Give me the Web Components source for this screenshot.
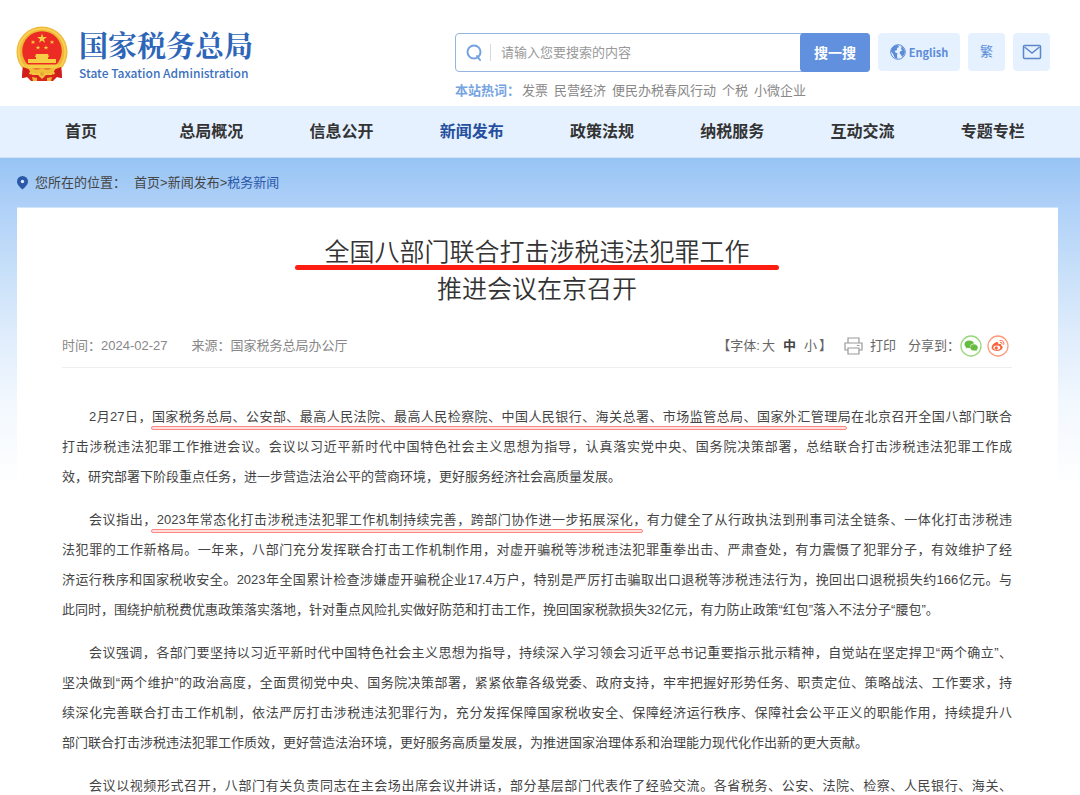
<!DOCTYPE html>
<html lang="zh-CN">
<head>
<meta charset="utf-8">
<meta name="viewport" content="width=device-width, initial-scale=1">
<title>国家税务总局 - 税务新闻</title>
<style>
  body { margin: 0; background: #fff; color: #333; font: 13px/20px "Liberation Sans", "Noto Sans CJK SC", sans-serif; }
</style>
</head>
<body>
<tax-page></tax-page>

<script>
const define = (name, html) => {
  const template = document.createElement('template');
  template.innerHTML = html;
  customElements.define(name, class extends HTMLElement {
    constructor() {
      super();
      this.attachShadow({ mode: 'open' }).append(template.content.cloneNode(true));
    }
  });
};

define('tax-logo', `
<style>
  :host { display: block; }
  a { display: flex; align-items: center; gap: 10px; color: #2d66b8; text-decoration: none; }
  svg { display: block; flex: none; }
  span { display: grid; gap: 3px; }
  strong { font: 700 29px/35px "Noto Serif CJK SC", "Noto Sans CJK SC", serif; }
  small { font: 500 12px/16px "Noto Sans CJK SC", sans-serif; color: #3a70bd; }
</style>
<a href="#">
  <svg width="53" height="56" viewBox="0 0 53 56" role="img" aria-label="国徽">
    <path d="M7 37 6 52l5-1 4 4h22l4-4 5 1-1-15z" fill="#d9231d"/>
    <circle cx="26" cy="26" r="25.500" fill="#efb735"/>
    <circle cx="26" cy="26" r="23.300" fill="none" stroke="#f8cf54" stroke-width="2"/>
    <circle cx="26" cy="25" r="19.800" fill="#ec2c24"/>
    <g fill="#f6cd45">
      <path d="m26 7.500 1.200 3.500h3.700l-3 2.200 1.100 3.600-3-2.200-3 2.200 1.100-3.600-3-2.200h3.700z"/>
      <path d="m17 14 .6 1.500h1.600l-1.200 1 .5 1.600-1.500-1-1.500 1 .5-1.600-1.200-1h1.600z"/>
      <path d="m36 14 .6 1.500h1.600l-1.200 1 .5 1.600-1.500-1-1.500 1 .5-1.600-1.200-1h1.600z"/>
      <path d="m22 19.500 .6 1.500h1.600l-1.200 1 .5 1.600-1.500-1-1.500 1 .5-1.600-1.200-1h1.600z"/>
      <path d="m30 19.500 .6 1.500h1.600l-1.200 1 .5 1.600-1.500-1-1.500 1 .5-1.600-1.200-1h1.600z"/>
      <path d="M20 28h12l1 3h-1v2h8v4H12v-4h8v-2h-1z"/>
      <path d="M8 38.500h36l-4 4H12z"/>
    </g>
    <path d="m7 41 8 3-4 7-5 1zM45 41l-8 3 4 7 5 1z" fill="#d01f1b"/>
    <path d="M12 42q8 3 14 0 6 3 14 0l-3 5-6-1-5 4-5-4-6 1z" fill="#f2bd38"/>
    <path d="M15 47h22v4l-3 4H18l-3-4z" fill="#da251e"/>
    <path d="M14 46q6 2 12 0 6 2 12 0l-2 3h-6l-4 4-4-4h-6z" fill="#f4c543"/>
    <path d="m16 51 5 1v3h-4zM36 51l-5 1v3h4z" fill="#eeb538"/>
    <circle cx="26" cy="48" r="2" fill="#e8a832"/>
  </svg>
  <span><strong>国家税务总局</strong><small>State Taxation Administration</small></span>
</a>`);

define('tax-search', `
<style>
  :host { display: block; flex: 1; min-width: 0; }
  form { display: flex; box-sizing: border-box; height: 39px; border: 1px solid #94b4e2; border-radius: 4px; }
  label { flex: 1; min-width: 0; display: flex; align-items: center; padding-left: 10px; }
  svg { flex: none; }
  i { width: 1px; height: 17px; margin: 0 10px 0 8px; background: #d5d9df; }
  input { flex: 1; min-width: 0; border: 0; padding: 0; outline: 0; background: none; font: inherit; color: #333; }
  input::placeholder { color: #999; opacity: 1; }
  button { width: 70px; margin: -1px; border: 0; border-radius: 4px; background: #6191de; color: #fff; font: inherit; font-size: 14px; font-weight: 700; padding: 0; }
</style>
<form>
  <label aria-label="搜索">
    <svg width="16" height="18" viewBox="0 0 16 18" fill="none" stroke="#75a2e0" stroke-width="2"><circle cx="8" cy="8" r="6.500"/><path d="m11 12 3 4" stroke-linecap="round"/></svg>
    <i></i>
    <input type="text" placeholder="请输入您要搜索的内容">
  </label>
  <button type="button">搜一搜</button>
</form>`);

define('tax-tools', `
<style>
  :host { display: flex; gap: 8px; }
  a, button { display: flex; align-items: center; justify-content: center; box-sizing: border-box; height: 38px; width: 37px; border: 0; border-radius: 4px; padding: 0; background: #e5f1ff; color: #5c8cd9; font: inherit; text-decoration: none; }
  .en { width: 82px; gap: 3px; font: 700 11px/20px "Noto Sans CJK SC", sans-serif; }
</style>
<a class="en" href="#">
  <svg width="16" height="16" viewBox="0 0 16 16"><circle cx="8" cy="8" r="7.300" fill="#e5f1ff" stroke="#5c8cd9" stroke-width="1"/><path d="M2 4 5 1.500 8 1l1 2-2 1v2L4.500 7l1 1.500 2 1-.5 2 .5 3.500-3-1.500L3 10 .8 7zM10 1.500l3 2L15 7l-.5 3-2 3-1.500-2-1.500-2 1-2 2-.5-1.500-1.500.5-2z" fill="#5c8cd9"/></svg>
  English
</a>
<button type="button">繁</button>
<a href="#" aria-label="邮箱">
  <svg width="20" height="16" viewBox="0 0 20 16" fill="none" stroke="#5d87c8" stroke-width="1.500"><rect x="1.500" y="1.500" width="17" height="13" rx="1"/><path d="m2.500 3 7.500 6 7.500-6"/></svg>
</a>`);

define('tax-hotwords', `
<style>
  :host { display: flex; gap: 2px; line-height: 20px; white-space: nowrap; }
  b { color: #76a4e1; }
  nav { display: flex; gap: 6px; }
  a { color: #888; text-decoration: none; }
</style>
<b>本站热词：</b>
<nav><a href="#">发票</a><a href="#">民营经济</a><a href="#">便民办税春风行动</a><a href="#">个税</a><a href="#">小微企业</a></nav>`);

define('tax-header', `
<style>
  :host { display: flex; justify-content: space-between; align-items: flex-start; box-sizing: border-box; height: 106px; padding: 0 30px 0 16px; }
  tax-logo { padding-top: 26px; }
  .side { flex: 0 1 595px; padding-top: 33px; }
  .row { display: flex; gap: 8px; margin-bottom: 9px; }
</style>
<tax-logo></tax-logo>
<div class="side">
  <div class="row"><tax-search></tax-search><tax-tools></tax-tools></div>
  <tax-hotwords></tax-hotwords>
</div>`);

define('tax-nav', `
<style>
  :host { display: block; background: #e5f1ff; border-bottom: 1px solid #cfe2fa; padding: 0 22px 0 16px; }
  nav { display: grid; grid-template-columns: repeat(8, 1fr); }
  a { text-align: center; font-size: 16px; line-height: 51px; font-weight: 700; color: #333; text-decoration: none; }
  a[aria-current] { color: #254f9e; }
</style>
<nav><a href="#">首页</a><a href="#">总局概况</a><a href="#">信息公开</a><a href="#" aria-current="page">新闻发布</a><a href="#">政策法规</a><a href="#">纳税服务</a><a href="#">互动交流</a><a href="#">专题专栏</a></nav>`);

define('tax-crumbs', `
<style>
  :host { display: flex; align-items: center; height: 49px; color: #444; }
  svg { margin-right: 7px; }
  nav { margin-left: 8px; }
  a { color: inherit; text-decoration: none; }
  a[aria-current] { color: #2b58a8; }
</style>
<svg width="11" height="14" viewBox="0 0 11 14"><path d="M5.500 0A5.500 5.500 0 0 0 0 5.500C0 9 3.500 11.500 5.500 13.500 7.500 11.500 11 9 11 5.500A5.500 5.500 0 0 0 5.500 0z" fill="#2a59a8"/><circle cx="5.500" cy="5.500" r="1.700" fill="#dcebff"/></svg>
<span>您所在的位置：</span>
<nav><a href="#">首页</a>&gt;<a href="#">新闻发布</a>&gt;<a href="#" aria-current="page">税务新闻</a></nav>`);

define('article-meta', `
<style>
  :host { display: flex; align-items: center; height: 24px; padding-bottom: 9px; border-bottom: 1px solid #eee; color: #888; white-space: nowrap; }
  .src { margin-left: 24px; }
  .size { margin-left: auto; display: flex; gap: 8px; color: #666; }
  .size span:first-child { margin-right: -6px; }
  button { border: 0; padding: 0; background: none; font: inherit; color: inherit; display: flex; align-items: center; gap: 7px; }
  .on { font-weight: 700; color: #444; }
  .size span:last-child { margin-left: -6px; }
  .print { margin-left: 12px; color: #666; }
  .share { margin-left: 12px; margin-right: 3px; display: flex; align-items: center; color: #666; }
  .share a { display: block; height: 22px; }
  .share a + a { margin-left: 5px; }
  svg { display: block; }
</style>
<span>时间：2024-02-27</span>
<span class="src">来源：国家税务总局办公厅</span>
<div class="size"><span>【字体:</span><button type="button">大</button><button type="button" class="on">中</button><button type="button">小</button><span>】</span></div>
<button type="button" class="print">
  <svg width="19" height="18" viewBox="0 0 19 18" fill="none" stroke="#999" stroke-width="1.200"><path d="M4 6V1h11v5M4 13H1V6h17v7h-3"/><path d="M4 11h11v6H4zM13 8.500h2.500"/></svg>
  打印
</button>
<div class="share"><span>分享到：</span>
  <a href="#" aria-label="微信"><svg width="22" height="22" viewBox="0 0 22 22"><circle cx="11" cy="11" r="10" fill="#fff" stroke="#99d67d" stroke-width="1.300"/><path d="M9.200 5.500C6.500 5.500 4.500 7.200 4.500 9.300c0 1.200.6 2.200 1.700 2.900l-.5 1.500 1.800-.9c1 .3 1.800.3 2.600.2-.4-2.700 1.700-4.400 4.100-4.400-.5-1.900-2.600-3.100-5-3.100z" fill="#66bd42"/><path d="M14 9.200c-2.200 0-3.800 1.400-3.800 3.200s1.700 3.200 3.800 3.200c.5 0 .9-.1 1.400-.2l1.400.8-.4-1.300c.9-.6 1.400-1.500 1.400-2.500 0-1.800-1.700-3.200-3.800-3.200z" fill="#66bd42"/></svg></a>
  <a href="#" aria-label="微博"><svg width="22" height="22" viewBox="0 0 22 22"><circle cx="11" cy="11" r="10" fill="#fff" stroke="#ff9c7d" stroke-width="1.300"/><path d="M9.800 7c-2 .3-5.200 3.200-5.200 5.600 0 2.100 2.600 3.400 5.300 3.400 3.500 0 5.700-1.900 5.700-3.700 0-1-.8-1.500-1.500-1.700.5-1.800-1-2-3-1.200C11.600 8 11.400 6.800 9.800 7z" fill="#f8623b"/><ellipse cx="9.800" cy="12.700" rx="3.500" ry="2.100" fill="#fff"/><circle cx="9.300" cy="12.900" r="1.600" fill="#f8623b"/><path d="M13 5.500c2.500-.6 4.300 1.200 3.800 3.700M13.300 7.300c1.200-.2 2 .6 1.800 1.800" fill="none" stroke="#f8623b" stroke-linecap="round"/></svg></a>
</div>`);

define('article-title', `
<style>
  :host { display: block; text-align: center; }
  h1 { margin: 0; font-size: 25px; line-height: 37px; font-weight: 350; color: #333; }
  .marked { position: relative; }
  .marked::after { content: ""; position: absolute; left: -29px; right: -29px; bottom: -4px; height: 5px; border-radius: 3px; background: #fd1d12; }
</style>
<h1><span class="marked"><slot name="first"></slot></span><br><slot></slot></h1>`);

define('text-mark', `
<style>
  :host { position: relative; }
  :host::after { content: ""; position: absolute; left: 62px; right: 4px; bottom: -6px; height: 2px; border: 1px solid #fb8883; border-radius: 2px; background: #ffdedb; }
</style><slot></slot>`);

define('text-line', `
<style>
  :host { display: block; text-align: justify; text-align-last: justify; }
  :host([first]) { text-indent: 27px; }
  :host([end]) { text-align-last: left; }
</style><slot></slot>`);

define('tax-article', `
<style>
  :host { display: block; background: #fff; border-top: 1px solid #d3e5fb; padding: 26px 46px 0 45px; }
  article-meta { margin: 26px 0 34px; }
  p { margin: 0 0 13px; line-height: 30px; color: #444; }
  p:last-child { margin: 0; }
</style>
<article>
<article-title><span slot="first">全国八部门联合打击涉税违法犯罪工作</span>推进会议在京召开</article-title>
<article-meta></article-meta>
<p><text-line first><text-mark>2月27日，国家税务总局、公安部、最高人民法院、最高人民检察院、中国人民银行、海关总署、市场监管总局、国家外汇管理局</text-mark>在北京召开全国八部门联合</text-line><text-line>打击涉税违法犯罪工作推进会议。会议以习近平新时代中国特色社会主义思想为指导，认真落实党中央、国务院决策部署，总结联合打击涉税违法犯罪工作成</text-line><text-line end>效，研究部署下阶段重点任务，进一步营造法治公平的营商环境，更好服务经济社会高质量发展。</text-line></p>
<p><text-line first><text-mark>会议指出，2023年常态化打击涉税违法犯罪工作机制持续完善，跨部门协作进一步拓展深化，</text-mark>有力健全了从行政执法到刑事司法全链条、一体化打击涉税违</text-line><text-line>法犯罪的工作新格局。一年来，八部门充分发挥联合打击工作机制作用，对虚开骗税等涉税违法犯罪重拳出击、严肃查处，有力震慑了犯罪分子，有效维护了经</text-line><text-line>济运行秩序和国家税收安全。2023年全国累计检查涉嫌虚开骗税企业17.4万户，特别是严厉打击骗取出口退税等涉税违法行为，挽回出口退税损失约166亿元。与</text-line><text-line end>此同时，围绕护航税费优惠政策落实落地，针对重点风险扎实做好防范和打击工作，挽回国家税款损失32亿元，有力防止政策“红包”落入不法分子“腰包”。</text-line></p>
<p><text-line first>会议强调，各部门要坚持以习近平新时代中国特色社会主义思想为指导，持续深入学习领会习近平总书记重要指示批示精神，自觉站在坚定捍卫“两个确立”、</text-line><text-line>坚决做到“两个维护”的政治高度，全面贯彻党中央、国务院决策部署，紧紧依靠各级党委、政府支持，牢牢把握好形势任务、职责定位、策略战法、工作要求，持</text-line><text-line>续深化完善联合打击工作机制，依法严厉打击涉税违法犯罪行为，充分发挥保障国家税收安全、保障经济运行秩序、保障社会公平正义的职能作用，持续提升八</text-line><text-line end>部门联合打击涉税违法犯罪工作质效，更好营造法治环境，更好服务高质量发展，为推进国家治理体系和治理能力现代化作出新的更大贡献。</text-line></p>
<p><text-line first>会议以视频形式召开，八部门有关负责同志在主会场出席会议并讲话，部分基层部门代表作了经验交流。各省税务、公安、法院、检察、人民银行、海关、</text-line></p>
</article>`);

define('tax-page', `
<style>
  :host { display: block; }
  main { padding: 0 22px 0 17px; background: linear-gradient(#97c4f4 0, #b0d1f8 50px, #c8e0f9 115px, #e0edfc 180px, #f2f8fe 245px, #fff 330px); }
</style>
<tax-header></tax-header>
<tax-nav></tax-nav>
<main><tax-crumbs></tax-crumbs><tax-article></tax-article></main>`);
</script>
</body>
</html>
